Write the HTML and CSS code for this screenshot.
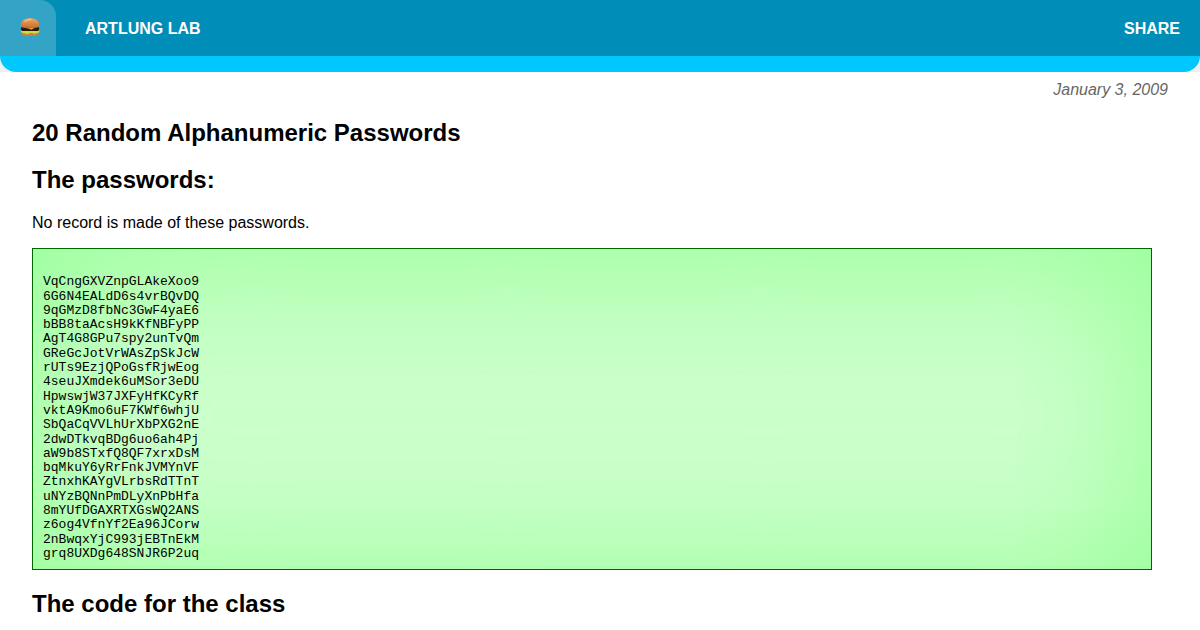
FILE: index.html
```html
<!DOCTYPE html>
<html lang="en">
<head>
<meta charset="utf-8">
<title>20 Random Alphanumeric Passwords</title>
<link rel="stylesheet" href="styles.css">
</head>
<body>
<div class="header-wrap">
<header class="header">
<nav class="bar">
<button class="menu" type="button" aria-label="Menu">
<svg class="burger" viewBox="0 0 20 20" aria-hidden="true">
<defs>
<linearGradient id="bun" x1="0" y1="0" x2="0" y2="1">
<stop offset="0" stop-color="#f0a560"/>
<stop offset="1" stop-color="#c96f30"/>
</linearGradient>
</defs>
<path d="M1.500 14h17v1c0 2-1.500 3-3.500 3h-10c-2 0-3.500-1-3.500-3z" fill="#cf8038"/>
<path d="M1 12h18c.8 1.200.3 2.800-1 2.800-1.500 0-2 .9-3.500.9s-2-.7-3.500-.7-2.500.9-4 .9-2-.9-3.500-.9c-2.200 0-3.300-1.500-2.500-3z" fill="#c4e040"/>
<path d="M1.500 9h17c1 1.200.8 3.900-.8 4.100H2.300C.7 12.900.5 10.200 1.500 9z" fill="#2c170c"/>
<path d="M3 9.500h13l-3 1.300-1.500 1-2-1z" fill="#e8a935"/>
<path d="M1 6.500c0-4.300 4-6.300 9-6.300s9 2 9 6.300c0 2.200-1 3.200-2.800 3.200H3.800C2 9.700 1 8.700 1 6.500z" fill="url(#bun)"/>
<path d="M5 3.500c1.500-1.500 4-2 6-1.900" fill="none" stroke="#ffd09a" stroke-width="1" stroke-linecap="round"/>
</svg>
</button>
<a class="brand" href="#">ARTLUNG LAB</a>
<a class="share" href="#">SHARE</a>
</nav>
</header>
</div>
<main class="content">
<time class="date" datetime="2009-01-03">January 3, 2009</time>
<h1 class="heading">20 Random Alphanumeric Passwords</h1>
<h2 class="heading">The passwords:</h2>
<p class="note">No record is made of these passwords.</p>
<pre class="passwords">

VqCngGXVZnpGLAkeXoo9
6G6N4EALdD6s4vrBQvDQ
9qGMzD8fbNc3GwF4yaE6
bBB8taAcsH9kKfNBFyPP
AgT4G8GPu7spy2unTvQm
GReGcJotVrWAsZpSkJcW
rUTs9EzjQPoGsfRjwEog
4seuJXmdek6uMSor3eDU
HpwswjW37JXFyHfKCyRf
vktA9Kmo6uF7KWf6whjU
SbQaCqVVLhUrXbPXG2nE
2dwDTkvqBDg6uo6ah4Pj
aW9b8STxfQ8QF7xrxDsM
bqMkuY6yRrFnkJVMYnVF
ZtnxhKAYgVLrbsRdTTnT
uNYzBQNnPmDLyXnPbHfa
8mYUfDGAXRTXGsWQ2ANS
z6og4VfnYf2Ea96JCorw
2nBwqxYjC993jEBTnEkM
grq8UXDg648SNJR6P2uq</pre>
<h2 class="heading">The code for the class</h2>
</main>
</body>
</html>
```
FILE: styles.css
```css
* {
  box-sizing: border-box;
}

body {
  margin: 0;
  background: #fff;
  color: #000;
  font: 16px/18px Helvetica, "Liberation Sans", Arial, sans-serif;
}

.header-wrap {
  background: #eee;
}

.header {
  padding-bottom: 16px;
  overflow: hidden;
  background: #00c8ff;
  border-radius: 0 0 16px 16px;
}

.bar {
  display: flex;
  align-items: center;
  padding-right: 20px;
  background: #008db7;
}

.menu {
  display: flex;
  align-items: center;
  justify-content: center;
  width: 56px;
  height: 56px;
  margin-right: 29px;
  padding: 0 0 0 4px;
  border: 0;
  border-radius: 0 16px 0 0;
  background: #33a4c5;
}

.burger {
  width: 20px;
  height: 20px;
}

.brand,
.share {
  padding-top: 2px;
  color: #fff;
  font-weight: bold;
  text-decoration: none;
}

.share {
  margin-left: auto;
}

.content {
  padding: 9px 32px 0;
}

.date {
  display: block;
  color: #666;
  font-style: italic;
  text-align: right;
}

.heading {
  margin: 20px 0;
  font-size: 24px;
  line-height: 27px;
}

.note {
  margin: 21px 0 16px;
}

.passwords {
  margin: 0 16px 20px 0;
  padding: 12px 10px 8px;
  overflow: auto;
  border: 1px solid #060;
  background: #cfc;
  box-shadow: inset 0 8px 150px #90ff90;
  font: 13px/1.1 "Courier New", "Liberation Mono", monospace;
}
```
